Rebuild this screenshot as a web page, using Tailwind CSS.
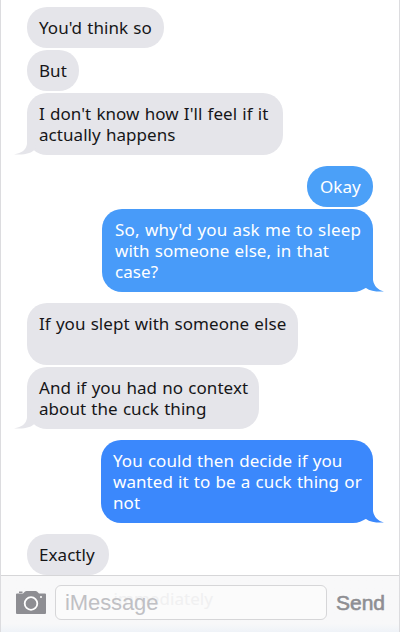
<!DOCTYPE html>
<html lang="en">
<head>
<meta charset="utf-8">
<title>Messages</title>
<script src="https://cdn.jsdelivr.net/npm/@tailwindcss/browser@4"></script>
</head>
<body class="bg-white">
<div class="relative flex flex-col h-[632px] w-[400px] overflow-hidden border-x border-[#dcdcdf] bg-white font-['Noto_Sans',sans-serif] text-[17px] leading-[21px] text-[#161618]">
    <div id="chat-messages" class="flex flex-col flex-1 items-start pt-[7px] pl-[26px] pr-[26px] whitespace-nowrap tracking-[0.05px] [word-spacing:0.7px]">
        <div class="w-[137px] rounded-[20px] bg-[#e5e5ea] py-[10px] pl-[12px]">You'd think so</div>
        <div class="mt-[2px] w-[52px] rounded-[20px] bg-[#e5e5ea] py-[10px] pl-[12px]">But</div>
        <div class="relative mt-[2px] w-[256px] rounded-[20px] bg-[#e5e5ea] py-[10px] pl-[12px]">
            I don't know how I'll feel if it<br>actually happens
            <svg class="absolute -left-[13px] bottom-0" width="24" height="22" viewBox="0 0 24 22" fill="#e5e5ea"><path d="M13 0V11C12 17 8 20 0 21.500C7 22 15 21 19 18L23 15L15 0Z"/></svg>
        </div>

        <div class="mt-[11px] w-[66px] self-end rounded-[20px] bg-[#4ba0f8] py-[10px] pl-[13px] text-white">Okay</div>
        <div class="relative mt-[2px] w-[271px] self-end rounded-[20px] bg-[#489bf9] py-[10px] pl-[13px] text-white">
            <span class="tracking-[0.15px]">So, why'd you ask me to sleep</span><br>with someone else, in that<br>case?
            <svg class="absolute -right-[11px] bottom-0" width="30" height="20" viewBox="0 0 30 20" fill="#489bf9"><path d="M19 0V8C20 14 24 18 30 19.500C23 20 16 19 12 16L4 18V0Z"/></svg>
        </div>

        <div class="mt-[11px] w-[271px] rounded-[20px] bg-[#e5e5ea] pt-[10px] pb-[31px] pl-[12px]">If you slept with someone else</div>
        <div class="relative mt-[2px] w-[232px] rounded-[20px] bg-[#e5e5ea] py-[10px] pl-[12px]">
            And if you had no context<br>about the cuck thing
            <svg class="absolute -left-[13px] bottom-0" width="24" height="22" viewBox="0 0 24 22" fill="#e5e5ea"><path d="M13 0V11C12 17 8 20 0 21.500C7 22 15 21 19 18L23 15L15 0Z"/></svg>
        </div>

        <div class="relative mt-[11px] w-[272px] self-end rounded-[20px] bg-[#3b88fc] py-[10px] pl-[12px] text-white">
            You could then decide if you<br>wanted it to be a cuck thing or<br>not
            <svg class="absolute -right-[11px] bottom-0" width="30" height="20" viewBox="0 0 30 20" fill="#3b88fc"><path d="M19 0V8C20 14 24 18 30 19.500C23 20 16 19 12 16L4 18V0Z"/></svg>
        </div>

        <div class="mt-[11px] w-[82px] rounded-[20px] bg-[#e5e5ea] py-[10px] pl-[12px]">Exactly</div>
    </div>

    <div id="chat-controls" class="flex h-[57px] shrink-0 items-start border-t border-[#d6d6d8] bg-linear-to-b from-[#f8f8f9] from-85% to-[#eff3f8] font-['Liberation_Sans',sans-serif]">
        <svg class="mt-[14px] ml-[14px]" width="32" height="25" viewBox="0 0 32 25" fill="#8e8e93">
            <path d="M1 4.500Q1 3.500 2 3.500H8L10 1.500Q10.500 1 11.500 1H20.500Q21.500 1 22 1.500L24 3.500H30Q31 3.500 31 4.500V23Q31 24 30 24H2Q1 24 1 23Z"/>
            <rect x="4" y="1.500" width="3.500" height="1.500"/>
            <circle cx="16" cy="13.500" r="6.300" fill="none" stroke="#fff" stroke-width="1.800"/>
            <circle cx="26" cy="7" r="1" fill="#fff"/>
        </svg>
        <div class="relative mt-[9px] ml-[8px] h-[35px] w-[272px] rounded-md border border-[#d6d6d8] bg-[#fbfbfb] pl-[9px] text-[22px] leading-[34px] tracking-[-0.1px] text-[#c0c0c4]">
            <!-- bubble text showing faintly through the translucent bar -->
            <span class="absolute top-[2px] right-[113px] font-['Noto_Sans',sans-serif] text-[17px] leading-[21px] tracking-[0.05px] text-[#f0f0f1]">immediately</span>
            <span class="relative">iMessage</span>
        </div>
        <div class="mt-[11px] ml-[9px] text-[21px] leading-[32px] text-[#8e8e93] [-webkit-text-stroke:0.6px_#8e8e93]">Send</div>
    </div>
</div>
</body>
</html>
